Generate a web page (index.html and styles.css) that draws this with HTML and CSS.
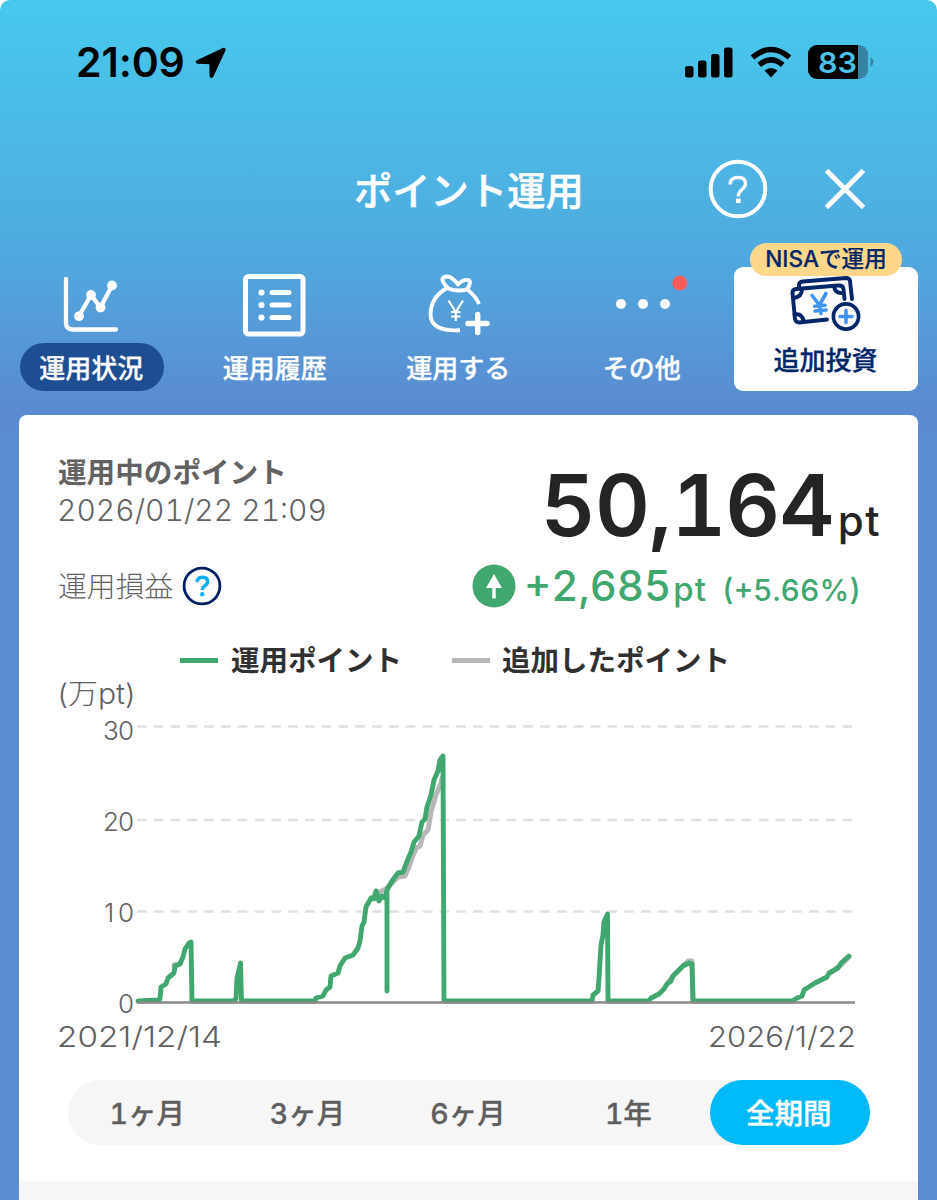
FILE: index.html
```html
<!DOCTYPE html>
<html lang="ja">
<head>
<meta charset="utf-8">
<title>ポイント運用</title>
<link rel="stylesheet" href="styles.css">
</head>
<body>
<div class="screen">
  <div class="status">
    <span class="clock">21:09</span>
    <svg class="locate" width="33" height="33" viewBox="0 0 33 33"><path d="M29.700 3.800 3.700 15.900 17.200 16.300 17.500 30Z" fill="#000" stroke="#000" stroke-width="3.900" stroke-linejoin="round"/></svg>
    <svg class="signal" width="48" height="31" viewBox="0 0 48 31"><rect x="0" y="19" width="8.500" height="11.500" rx="2.500"/><rect x="13" y="13.500" width="8.500" height="17" rx="2.500"/><rect x="26" y="7" width="8.500" height="23.500" rx="2.500"/><rect x="39" y="0.500" width="8.500" height="30" rx="2.500"/></svg>
    <svg class="wifi" width="42" height="31" viewBox="0 0 42 31"><g fill="none" stroke="#000" stroke-width="5.500"><path d="M2.500 10.500Q21-5.500 39.500 10.500"/><path d="M9.300 17.800Q21 8 32.700 17.800"/></g><path d="M14.500 23.500Q21 18.500 27.500 23.500L21 30.500Z"/></svg>
    <svg class="battery" width="67" height="34" viewBox="0 0 67 34"><defs><clipPath id="charge"><path d="M0 0H50V34H0Z"/></clipPath></defs><rect x="0" y="0" width="60" height="34" rx="9" fill="#3682a2"/><rect width="60" height="34" rx="9" clip-path="url(#charge)"/><path d="M62.500 12Q68.500 17 62.500 22Z" fill="#3682a2"/><text x="10" y="27.500" textLength="39" lengthAdjust="spacingAndGlyphs" class="charge">83</text></svg>
  </div>
  <header class="titlebar">
    <h1>ポイント運用</h1>
    <svg class="help" width="60" height="60" viewBox="0 0 60 60"><circle cx="30" cy="30" r="27.300" fill="none" stroke="#fff" stroke-width="4"/><path d="M22.200 25.500Q22 18.500 30.300 18.500Q37.500 18.500 37.500 24.500Q37.500 27.500 33.500 31Q30.400 33.500 30.400 37.500" fill="none" stroke="#fff" stroke-width="3.400"/><rect x="28" y="39.500" width="4.600" height="4.600" fill="#fff"/></svg>
    <svg class="close" width="42" height="42" viewBox="0 0 42 42"><path d="M2.500 2.500 39.500 39.500M39.500 2.500 2.500 39.500" stroke="#fff" stroke-width="5"/></svg>
  </header>
  <nav class="menu">
    <a class="item active"><svg width="62" height="70" viewBox="0 0 62 70"><g fill="none" stroke="#fff" stroke-width="4.300" stroke-linecap="round" stroke-linejoin="round"><path d="M5 9V53Q5 59.500 11.500 59.500H55"/><path d="M18 46 30 25 39.500 37.500 51 15.500"/></g><g fill="#fff"><circle cx="18" cy="46.300" r="4.900"/><circle cx="30" cy="25" r="4.900"/><circle cx="39.500" cy="37.500" r="4.900"/><circle cx="51" cy="15.500" r="4.900"/></g></svg><span>運用状況</span></a>
    <a class="item"><svg width="64" height="70" viewBox="0 0 64 70"><rect x="2.500" y="6.500" width="57.500" height="57.500" rx="3" fill="none" stroke="#fff" stroke-width="5"/><g fill="#fff"><circle cx="18.500" cy="22.500" r="3.100"/><circle cx="18.500" cy="35" r="3.100"/><circle cx="18.500" cy="47.500" r="3.100"/></g><path d="M29 22.500H46M29 35H46M29 47.500H46" stroke="#fff" stroke-width="5" stroke-linecap="round"/></svg><span>運用履歴</span></a>
    <a class="item"><svg width="66" height="70" viewBox="0 0 66 70"><g fill="none" stroke="#fff" stroke-width="3.900" stroke-linejoin="round"><path d="M34 60.200Q4.500 62 4.500 44Q5 27 21 18"/><path d="M40 18.500Q50 26 53 34"/><path d="M22.500 18.500Q14 10.500 17.500 7.500Q24 3.500 32 14.500Q37 9 42.500 10Q46 12 41 19.500Q31 22 22.500 18.500Z"/></g><path d="M51.700 44.500V62.500M42 53.500H61" stroke="#fff" stroke-width="5.400" stroke-linecap="round"/><path d="M22.500 30.500 29.800 42 37 30.500M29.800 42V51M25 42H34.500M25 46.500H34.500" fill="none" stroke="#fff" stroke-width="2.200"/></svg><span>運用する</span></a>
    <a class="item"><svg width="80" height="70" viewBox="0 0 80 70"><g fill="#fff"><circle cx="19" cy="34" r="5"/><circle cx="41" cy="34" r="5"/><circle cx="63" cy="34" r="5"/></g><circle cx="77.700" cy="13" r="7.400" fill="#ff5b5b"/></svg><span>その他</span></a>
    <a class="invest">
      <b class="badge">NISAで運用</b>
      <svg width="72" height="60" viewBox="0 0 72 60"><g fill="none" stroke="#002568" stroke-width="3.900" stroke-linecap="round" stroke-linejoin="round"><path d="M9 12V10Q9 7 13 6.500L56 3Q59.500 3 60 6L62 24"/><path d="M37 44.500 9 47.500Q6 47.500 5 44L2.500 18Q2.500 14.500 6 14L48 10.500Q53 10 53.500 14L54.500 24"/><path d="M12 14Q12 22 3.500 23M4.500 39.500Q12 38 14 46.500M44 11.500Q45 19 53.500 18"/></g><circle cx="56" cy="41.500" r="12.600" fill="#fff" stroke="#002568" stroke-width="3.700"/><g fill="none" stroke="#4193f3" stroke-width="3.600" stroke-linecap="round"><path d="M56 35.500V47.500M50 41.500H62"/><path d="M22 20.500 29.500 30 36 18.500M29.500 30 31 38.500M24.500 31.200 35 30.200M25 36 36 35"/></g></svg>
      <span>追加投資</span>
    </a>
  </nav>
  <main class="panel">
    <section class="balance">
      <div class="asof"><h2>運用中のポイント</h2><time>2026/01/22 21:09</time></div>
      <div class="total"><strong>50,164</strong><span>pt</span></div>
    </section>
    <section class="profit">
      <span class="profit-name">運用損益</span>
      <svg width="40" height="40" viewBox="0 0 40 40"><circle cx="20" cy="20" r="17.900" fill="none" stroke="#001f62" stroke-width="2.800"/><path d="M15 16.200Q15.500 11.300 20.400 11.300Q25.700 11.300 25.700 15.600Q25.700 18 22.500 20Q20.300 21.500 20.300 24" fill="none" stroke="#05adf3" stroke-width="3.400"/><circle cx="20.200" cy="28.300" r="2.200" fill="#05adf3"/></svg>
      <div class="gain">
        <svg width="44" height="44" viewBox="0 0 44 44"><circle cx="22" cy="22" r="21.500" fill="#40a86f"/><path d="M22 10 30 24H23.700V34.500H20.300V24H14Z" fill="#fff"/></svg>
        <strong>+2,685</strong><span class="unit">pt</span><span class="rate">(+5.66%)</span>
      </div>
    </section>
    <div class="legend"><i class="line own"></i><span>運用ポイント</span><i class="line added"></i><span>追加したポイント</span></div>
    <svg class="chart" width="899" height="385" viewBox="19 676 899 385">
      <g class="axis">
        <text class="scale" x="57.500" y="703.500" textLength="78" lengthAdjust="spacingAndGlyphs">(万pt)</text>
        <text x="103" y="740" textLength="31">30</text>
        <text x="103" y="831" textLength="31">20</text>
        <text x="104" y="922" textLength="30">10</text>
        <text x="118" y="1013">0</text>
      </g>
      <g class="dates"><text x="57" y="1047" textLength="165" lengthAdjust="spacingAndGlyphs">2021/12/14</text><text x="708" y="1047" textLength="148" lengthAdjust="spacingAndGlyphs">2026/1/22</text></g>
      <path class="grid" d="M137 726.500H854M137 820H854M137 911.500H854"/>
      <path class="series gray" d="M371 899 378 893 386 889 392 883 398 877 405 876 409 867 411 861 416 848 420 846 423 835 428 830 431 812 436 795 441 783 442 778M174 965 180 964M667 984 673 976 683 966 688 961 692 961 693 1000M829 974 841 965 849 957"/>
      <path class="series green" d="M138 1001 158 1000 160 999 161 987 166 984 168 978 174 973 175 966 180 964 183 957 185 949 189 943 191 942 192 1001H233L236 999 237 978 240.500 963 241.500 1001H315L316 998 323 996 326 990 330 987 331 976 338 973 340 966 345 958 353 955 358 948 360 941 362 926 364 922 366 907 371 898 374 899 376 891 379 901 382 896 385 898 387 890V991V890L392 881 398 873 403 872 408 859 411 852 414 842 419 836 422 822 425 819 427 807 431 795 434 780 438 771 440 760 443 756 444 1001H592L593 995 598 991 599 978 601 945 603 935 604 922 607.500 914 608 1001H649L651 998 659 994 664 989 667 984 671 981 673 976 683 966 689 963 692 964 693 1001H792L797 998 802 996 804 990 815 983 827 977 829 973 838 968 841 963 849 956"/>
      <path class="baseline" d="M137 1002.500H855"/>
    </svg>
    <div class="periods"><button>1ヶ月</button><button>3ヶ月</button><button>6ヶ月</button><button>1年</button><button class="selected">全期間</button></div>
    <div class="next"></div>
  </main>
</div>
</body>
</html>
```

FILE: styles.css
```css
* { box-sizing: border-box; }
body { margin: 0; background: #fff; font-family: Inter, "Noto Sans CJK JP", sans-serif; }
h1, h2 { margin: 0; }
svg { display: block; flex: none; overflow: visible; }
.screen { width: 937px; height: 1200px; overflow: hidden; border-radius: 10px 10px 0 0; background: linear-gradient(#47c9ed 0, #4fabdf 245px, #5b8ad0 415px, #5b8dd1 440px); }

.status { display: flex; height: 124px; padding-left: 76px; align-items: center; }
.clock { width: 118px; font-size: 41px; line-height: 50px; font-weight: 570; letter-spacing: -0.1px; }
.signal { margin-left: 458px; }
.wifi { margin-left: 17px; }
.battery { margin-left: 16px; }
.charge { font: 600 29px Inter, sans-serif; fill: #4cc0e7; }

.titlebar { display: flex; height: 130px; padding-left: 354px; align-items: center; }
.titlebar h1 { width: 354px; padding-bottom: 1px; color: #fff; font: 500 38.300px/56px "Noto Sans CJK JP", sans-serif; -webkit-text-stroke: 0.5px #fff; }
.close { margin-left: 56px; }

.menu { display: grid; grid-template-columns: repeat(4, 183.500px) 184px; height: 161px; }
.item { display: flex; flex-direction: column; align-items: center; padding-top: 16px; color: #fff; }
.item span { height: 48px; margin-top: 3px; padding: 0 20.500px 0 19.500px; border-radius: 24px; font: 500 26px/47px "Noto Sans CJK JP", sans-serif; -webkit-text-stroke: 0.3px; }
.active span { background: #1e4e92; }
.invest { display: flex; flex-direction: column; align-items: center; height: 124px; margin-top: 13px; border-radius: 9px; background: #fff; color: #002568; }
.badge { position: relative; z-index: 1; width: 152px; height: 33px; margin-top: -24px; border-radius: 17px; background: #ffd78b; text-align: center; font: 500 22.600px/31px Inter, "Noto Sans CJK JP", sans-serif; -webkit-text-stroke: 0.2px; }
.invest svg { margin-top: -1px; }
.invest span { margin: 5px 1px 0 0; font: 500 26px/38px "Noto Sans CJK JP", sans-serif; -webkit-text-stroke: 0.3px; }

.panel { width: 899px; height: 785px; margin-left: 19px; overflow: hidden; border-radius: 8px 8px 0 0; background: #fff; font-feature-settings: "tnum"; }
.balance { display: flex; justify-content: space-between; height: 141px; padding: 37px 38px 0 39px; }
.asof { color: #626262; }
.asof h2 { font: 700 28.600px/38px "Noto Sans CJK JP", sans-serif; }
.asof time { display: block; margin-left: -1px; font-size: 30px; line-height: 40px; font-weight: 300; white-space: nowrap; }
.total { display: flex; align-items: baseline; height: 100px; color: #252324; line-height: 100px; margin-top: 4px; }
.total strong { font-size: 85px; font-weight: 600; letter-spacing: -0.800px; margin-right: 4px; }
.total span { font-size: 42px; font-weight: 500; letter-spacing: 1.500px; margin-right: -1px; }
.profit { display: flex; align-items: center; height: 60px; padding: 0 57px 0 39px; }
.profit-name { width: 124px; padding-bottom: 2px; color: #626262; font: 300 28.800px/44px "Noto Sans CJK JP", sans-serif; }
.gain { display: flex; align-items: baseline; margin-left: auto; color: #40a86f; line-height: 53px; white-space: nowrap; }
.gain svg { align-self: center; margin-right: 8px; }
.gain strong { padding-top: 4px; font-size: 42px; font-weight: 550; }
.unit { margin-left: 2px; font-size: 33px; font-weight: 500; letter-spacing: 1px; }
.rate { margin-left: 15px; font-size: 30px; font-weight: 500; }
.legend { display: flex; align-items: center; height: 60px; padding: 28px 0 0 161px; color: #303030; font: 700 28.500px/42px "Noto Sans CJK JP", sans-serif; }
.legend span { margin-top: -3px; }
.line { width: 38px; height: 5px; margin-right: 13px; background: #40a86f; }
.added { margin-left: 50px; margin-right: 12px; background: #b7b7b7; }
.chart { font: 300 28px Inter, "Noto Sans CJK JP", sans-serif; }
.axis { font-size: 26px; fill: #606060; }
.axis .scale { font-size: 28px; }
.dates { font-size: 28px; fill: #606060; }
.grid { stroke: #e0e0e0; stroke-width: 2.500; stroke-dasharray: 9.600 7.200; }
.series { fill: none; stroke-width: 4.900; stroke-linecap: round; stroke-linejoin: round; }
.gray { stroke: #b7b7b7; }
.green { stroke: #40a86f; }
.baseline { stroke: #898989; stroke-width: 2.600; }
.periods { display: grid; grid-template-columns: repeat(5, 1fr); width: 802px; height: 65px; margin: 19px 0 0 49px; border-radius: 33px; background: #f6f6f6; }
.periods button { padding: 2px 2px 0 0; border: 0; border-radius: 33px; background: none; color: #5e5e5e; font: 500 28.500px/63px Inter, "Noto Sans CJK JP", sans-serif; font-feature-settings: "tnum"; -webkit-text-stroke: 0.3px; }
.periods .selected { background: #00b9f8; color: #fff; }
.next { height: 20px; margin-top: 36px; background: #f6f6f6; }
```
